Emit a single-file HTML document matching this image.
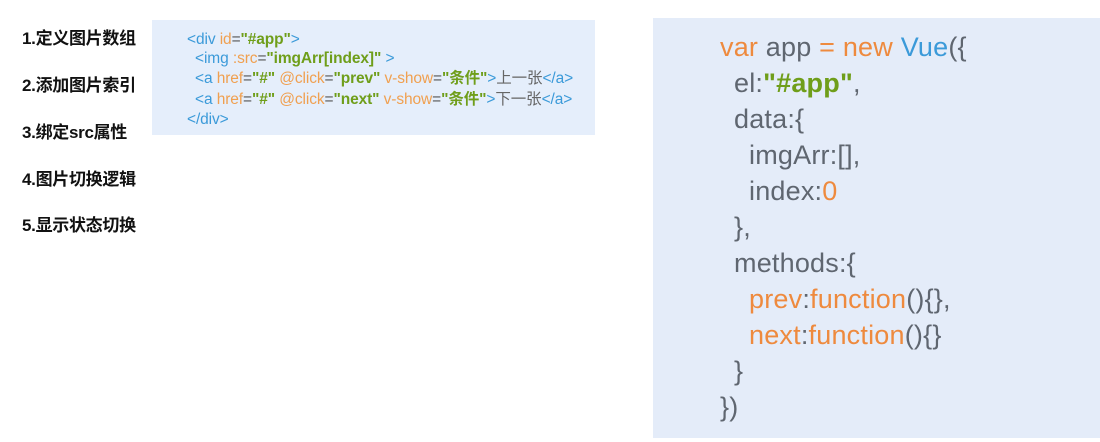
<!DOCTYPE html>
<html><head><meta charset="utf-8"><style>
body{margin:0;width:1100px;height:442px;background:#fff;position:relative;overflow:hidden;font-family:"Liberation Sans","Noto Sans CJK SC",sans-serif}
.lab{position:absolute;left:22px;font-size:17px;font-weight:bold;color:#111;letter-spacing:-0.3px}
#l{position:absolute;left:152px;top:20px;width:443px;height:115px;background:#e5eefb}
#l div{position:absolute;left:35px;font-size:15.5px;line-height:18px;white-space:pre;color:#555;letter-spacing:-0.1px}
#r{position:absolute;left:653px;top:18px;width:447px;height:420px;background:#e4ecf9}
#r div{position:absolute;font-size:27px;line-height:32px;white-space:pre;color:#5f6670;letter-spacing:0.2px}
.b{color:#3b9ad9}.o{color:#f0a050}.g{color:#6f9e1a;font-weight:bold}.k{color:#666}.v{color:#ee8a3e}
</style></head><body>
<div class="lab" style="top:24px">1.定义图片数组</div>
<div class="lab" style="top:71px">2.添加图片索引</div>
<div class="lab" style="top:118px">3.绑定src属性</div>
<div class="lab" style="top:165px">4.图片切换逻辑</div>
<div class="lab" style="top:211px">5.显示状态切换</div>
<div id="l">
<div style="top:11px"><span class="b">&lt;div</span> <span class="o">id</span>=<span class="g">"#app"</span><span class="b">&gt;</span></div>
<div style="top:30px;left:43px"><span class="b">&lt;img</span> <span class="o">:src</span>=<span class="g">"imgArr[index]"</span> <span class="b">&gt;</span></div>
<div style="top:50px;left:43px"><span class="b">&lt;a</span> <span class="o">href</span>=<span class="g">"#"</span> <span class="o">@click</span>=<span class="g">"prev"</span> <span class="o">v-show</span>=<span class="g">"条件"</span><span class="b">&gt;</span><span class="k">上一张</span><span class="b">&lt;/a&gt;</span></div>
<div style="top:71px;left:43px"><span class="b">&lt;a</span> <span class="o">href</span>=<span class="g">"#"</span> <span class="o">@click</span>=<span class="g">"next"</span> <span class="o">v-show</span>=<span class="g">"条件"</span><span class="b">&gt;</span><span class="k">下一张</span><span class="b">&lt;/a&gt;</span></div>
<div style="top:91px"><span class="b">&lt;/div&gt;</span></div>
</div>
<div id="r">
<div style="left:67px;top:13px"><span class="v">var</span> app <span class="v">= new</span> <span class="b">Vue</span>({</div>
<div style="left:81px;top:49px">el:<span class="g">"#app"</span>,</div>
<div style="left:81px;top:85px">data:{</div>
<div style="left:96px;top:121px">imgArr:[],</div>
<div style="left:96px;top:157px">index:<span class="v">0</span></div>
<div style="left:81px;top:193px">},</div>
<div style="left:81px;top:229px">methods:{</div>
<div style="left:96px;top:265px"><span class="v">prev</span>:<span class="v">function</span>(){},</div>
<div style="left:96px;top:301px"><span class="v">next</span>:<span class="v">function</span>(){}</div>
<div style="left:81px;top:337px">}</div>
<div style="left:67px;top:373px">})</div>
</div>
</body></html>
